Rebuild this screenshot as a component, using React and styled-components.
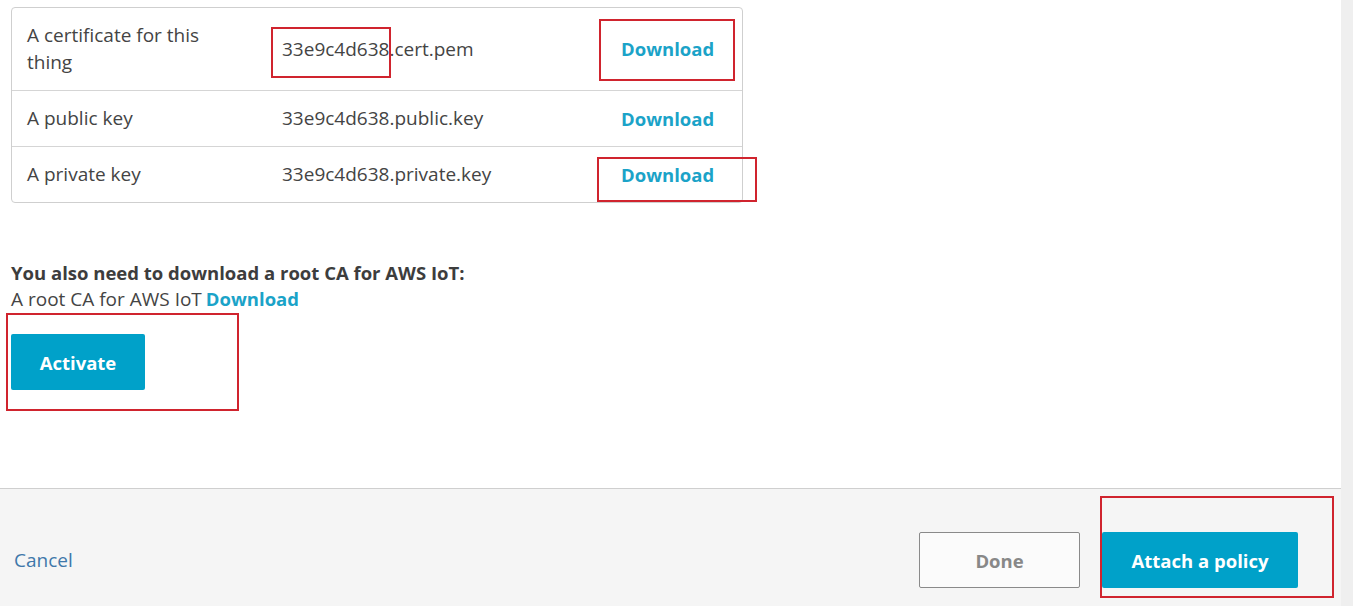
import React from 'react'
import styled, { createGlobalStyle } from 'styled-components'

const GlobalStyle = createGlobalStyle`
  html, body { margin: 0; padding: 0; background: #fff; }
  body { font-family: "Open Sans", "Noto Sans", sans-serif; color: #444; }
`

const files = [
  { label: ['A certificate for this', 'thing'], name: '33e9c4d638.cert.pem' },
  { label: ['A public key'], name: '33e9c4d638.public.key' },
  { label: ['A private key'], name: '33e9c4d638.private.key' },
]

// red annotation boxes drawn on top of the screenshot
const marks = [
  { left: 271, top: 27, width: 120, height: 51 },
  { left: 599, top: 19, width: 136, height: 62 },
  { left: 597, top: 157, width: 160, height: 45 },
  { left: 6, top: 313, width: 233, height: 98 },
  { left: 1100, top: 496, width: 234, height: 102 },
]

export default function App() {
  return (
    <>
      <GlobalStyle />
      <Screen>
        <Panel>
          <Main>
            <FileTable>
              {files.map(f => (
                <FileRow key={f.name}>
                  <Cell>{f.label.map(l => <div key={l}>{l}</div>)}</Cell>
                  <Cell>{f.name}</Cell>
                  <Cell><LinkText>Download</LinkText></Cell>
                </FileRow>
              ))}
            </FileTable>
            <RootCa>
              <strong>You also need to download a root CA for AWS IoT:</strong>
              <div>A root CA for AWS IoT<LinkText $gap={4}>Download</LinkText></div>
            </RootCa>
            <PrimaryButton $w={134} $top={22}>Activate</PrimaryButton>
          </Main>
          <Footer>
            <Cancel>Cancel</Cancel>
            <Actions>
              <GhostButton>Done</GhostButton>
              <PrimaryButton $w={196}>Attach a policy</PrimaryButton>
            </Actions>
          </Footer>
        </Panel>
        <ScrollTrack />
        {marks.map((m, i) => (
          <Mark key={i} style={{ left: m.left, top: m.top, width: m.width, height: m.height }} />
        ))}
      </Screen>
    </>
  )
}

const Screen = styled.div`
  position: relative;
  display: flex;
  width: 1353px;
  height: 606px;
  overflow: hidden;
`

const Panel = styled.div`
  flex: 1;
  display: flex;
  flex-direction: column;
`

const ScrollTrack = styled.div`
  width: 12px;
  background: #efefef;
`

const Main = styled.div`
  flex: 1;
  padding: 7px 0 0 11px;
`

const FileTable = styled.div`
  width: 730px;
  border: 1px solid #cfcfcf;
  border-radius: 4px;
`

const FileRow = styled.div`
  display: grid;
  grid-template-columns: 255px 339px 1fr;
  border-bottom: 1px solid #d5d5d5;
  &:last-child { border-bottom: none; }
`

const Cell = styled.div`
  padding: 14px 15px;
  font-size: 19px;
  line-height: 27px;
  color: #444;
  display: flex;
  flex-direction: column;
  justify-content: center;
`

const LinkText = styled.span`
  color: #1ba3c8;
  font-weight: 700;
  font-size: 18.5px;
  line-height: 24px;
  margin-left: ${p => p.$gap || 0}px;
`

const RootCa = styled.div`
  margin-top: 57px;
  font-size: 19px;
  line-height: 26px;
  color: #444;
  strong { color: #3d3d3d; font-size: 18.5px; }
`

const PrimaryButton = styled.button`
  width: ${p => p.$w}px;
  height: 56px;
  border: none;
  border-radius: 2px;
  background: #00a1c9;
  color: #fff;
  font-family: inherit;
  font-size: 18.5px;
  font-weight: 700;
  padding: 0;
  margin-top: ${p => p.$top || 0}px;
`

const Footer = styled.div`
  height: 118px;
  box-sizing: border-box;
  border-top: 1px solid #cfcfcf;
  background: #f5f5f5;
  display: flex;
  align-items: center;
  justify-content: space-between;
  padding: 43px 43px 18px 14px;
`

const Cancel = styled.span`
  color: #3f78aa;
  font-size: 19px;
`

const Actions = styled.div`
  display: flex;
  gap: 22px;
`

const GhostButton = styled.button`
  width: 161px;
  height: 56px;
  border: 1px solid #8a8a8a;
  border-radius: 2px;
  background: #fbfbfb;
  color: #888;
  font-family: inherit;
  font-size: 18.5px;
  font-weight: 700;
`

const Mark = styled.div`
  position: absolute;
  box-sizing: border-box;
  border: 2px solid #d0242e;
  pointer-events: none;
`
